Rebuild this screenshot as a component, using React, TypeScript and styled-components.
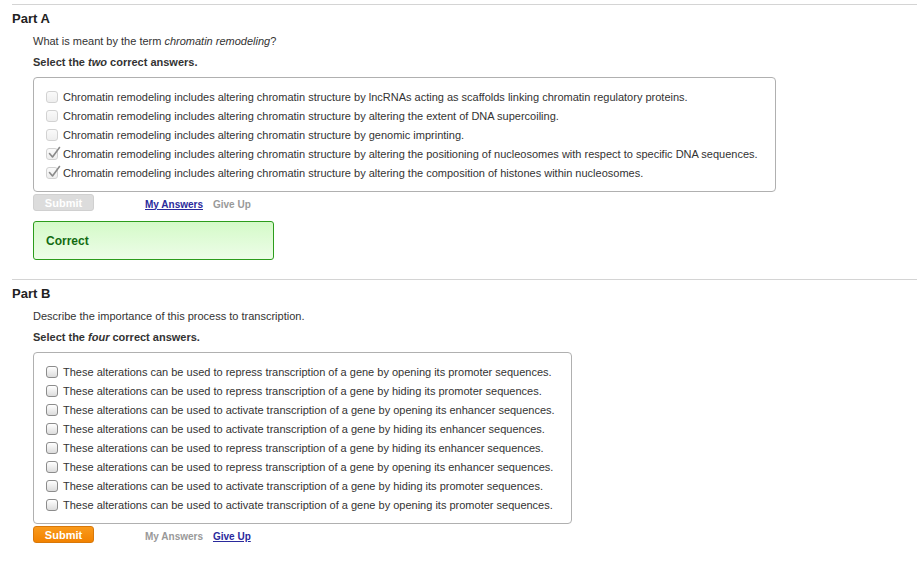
import React from "react";
import styled, { createGlobalStyle } from "styled-components";

const GlobalStyle = createGlobalStyle`
  html, body {
    margin: 0;
    padding: 0;
    background: #fff;
  }
  body {
    font-family: "Liberation Sans", Arial, Helvetica, sans-serif;
    color: #333;
  }
`;

const partA = [
  { text: "Chromatin remodeling includes altering chromatin structure by lncRNAs acting as scaffolds linking chromatin regulatory proteins.", checked: false },
  { text: "Chromatin remodeling includes altering chromatin structure by altering the extent of DNA supercoiling.", checked: false },
  { text: "Chromatin remodeling includes altering chromatin structure by genomic imprinting.", checked: false },
  { text: "Chromatin remodeling includes altering chromatin structure by altering the positioning of nucleosomes with respect to specific DNA sequences.", checked: true },
  { text: "Chromatin remodeling includes altering chromatin structure by altering the composition of histones within nucleosomes.", checked: true },
];

const partB = [
  "These alterations can be used to repress transcription of a gene by opening its promoter sequences.",
  "These alterations can be used to repress transcription of a gene by hiding its promoter sequences.",
  "These alterations can be used to activate transcription of a gene by opening its enhancer sequences.",
  "These alterations can be used to activate transcription of a gene by hiding its enhancer sequences.",
  "These alterations can be used to repress transcription of a gene by hiding its enhancer sequences.",
  "These alterations can be used to repress transcription of a gene by opening its enhancer sequences.",
  "These alterations can be used to activate transcription of a gene by hiding its promoter sequences.",
  "These alterations can be used to activate transcription of a gene by opening its promoter sequences.",
];

function CheckBox({ disabled, checked }: { disabled?: boolean; checked?: boolean }) {
  return (
    <Box $disabled={disabled}>
      {checked && (
        <Tick viewBox="0 0 14 14" width="14" height="14">
          <path d="M2.5 7.5 L5.5 11 L12.5 1.5" fill="none" stroke="#8a8a8a" strokeWidth="1.6" strokeLinecap="round" strokeLinejoin="round" />
        </Tick>
      )}
    </Box>
  );
}

export default function App() {
  return (
    <>
      <GlobalStyle />
      <Page>
        <Part>
          <PartTitle>Part A</PartTitle>
          <Content>
            <Question>
              What is meant by the term <em>chromatin remodeling</em>?
            </Question>
            <Instruction>
              Select the <em>two</em> correct answers.
            </Instruction>
            <Choices $width={743} $gap={8}>
              {partA.map((c) => (
                <Choice key={c.text}>
                  <CheckBox disabled checked={c.checked} />
                  <ChoiceText>{c.text}</ChoiceText>
                </Choice>
              ))}
            </Choices>
            <Actions>
              <SubmitButton $disabled>Submit</SubmitButton>
              <LinkText $active>My Answers</LinkText>
              <LinkText>Give Up</LinkText>
            </Actions>
            <Feedback>Correct</Feedback>
          </Content>
        </Part>
        <Part $gap={19}>
          <PartTitle>Part B</PartTitle>
          <Content>
            <Question>Describe the importance of this process to transcription.</Question>
            <Instruction>
              Select the <em>four</em> correct answers.
            </Instruction>
            <Choices $width={539} $gap={8}>
              {partB.map((t) => (
                <Choice key={t}>
                  <CheckBox />
                  <ChoiceText>{t}</ChoiceText>
                </Choice>
              ))}
            </Choices>
            <Actions>
              <SubmitButton>Submit</SubmitButton>
              <LinkText>My Answers</LinkText>
              <LinkText $active>Give Up</LinkText>
            </Actions>
          </Content>
        </Part>
      </Page>
    </>
  );
}

const Page = styled.div`
  padding: 4px 0 30px 12px;
  width: 905px;
`;

const Part = styled.section<{ $gap?: number }>`
  border-top: 1px solid #d4d4d4;
  margin-top: ${(p) => p.$gap ?? 0}px;
  padding-top: 6px;
`;

const PartTitle = styled.h2`
  margin: 0;
  font-size: 13px;
  line-height: 16px;
  font-weight: bold;
  color: #222;
`;

const Content = styled.div`
  padding-left: 21px;
`;

const Question = styled.p`
  margin: 7px 0 0;
  font-size: 11px;
  line-height: 14px;
  color: #333;
`;

const Instruction = styled.p`
  margin: 7px 0 0;
  font-size: 11px;
  line-height: 14px;
  font-weight: bold;
  color: #333;
`;

const Choices = styled.div<{ $width: number; $gap: number }>`
  margin-top: ${(p) => p.$gap}px;
  width: ${(p) => p.$width - 2}px;
  border: 1px solid #b0b0b0;
  border-radius: 4px;
  padding: 9px 0 9px;
`;

const Choice = styled.div`
  display: flex;
  align-items: center;
  height: 19px;
  padding-left: 12px;
`;

const Box = styled.span<{ $disabled?: boolean }>`
  position: relative;
  box-sizing: border-box;
  width: 12px;
  height: 12px;
  border-radius: 3px;
  flex: none;
  border: 1px solid ${(p) => (p.$disabled ? "#d2d2d2" : "#8c8c8c")};
  background: ${(p) =>
    p.$disabled
      ? "linear-gradient(#fafafa, #eeeeee)"
      : "linear-gradient(#ffffff, #dcdcdc)"};
`;

const Tick = styled.svg`
  position: absolute;
  left: 0;
  top: -3px;
`;

const ChoiceText = styled.span`
  margin-left: 5px;
  font-size: 11px;
  color: #333;
  white-space: nowrap;
`;

const Actions = styled.div`
  display: flex;
  align-items: center;
  margin-top: 2px;
  height: 17px;
`;

const SubmitButton = styled.button<{ $disabled?: boolean }>`
  box-sizing: border-box;
  width: 61px;
  height: 17px;
  padding: 0;
  border-radius: 3px;
  font-family: "Liberation Sans", Arial, sans-serif;
  font-size: 11px;
  font-weight: bold;
  color: #fff;
  border: 1px solid ${(p) => (p.$disabled ? "#d0d0d0" : "#d8780a")};
  background: ${(p) =>
    p.$disabled ? "#dcdcdc" : "linear-gradient(#f99a1c, #f28200)"};
  margin-right: 51px;
`;

const LinkText = styled.span<{ $active?: boolean }>`
  font-size: 10px;
  font-weight: bold;
  margin-right: 10px;
  padding-top: 3px;
  color: ${(p) => (p.$active ? "#2a2a9c" : "#999")};
  text-decoration: ${(p) => (p.$active ? "underline" : "none")};
`;

const Feedback = styled.div`
  box-sizing: border-box;
  margin-top: 10px;
  width: 241px;
  height: 39px;
  border: 1px solid #2c9c1c;
  border-radius: 3px;
  background: linear-gradient(#d4fac8, #edfde8);
  color: #126b12;
  font-size: 12px;
  font-weight: bold;
  display: flex;
  align-items: center;
  padding-left: 12px;
`;
